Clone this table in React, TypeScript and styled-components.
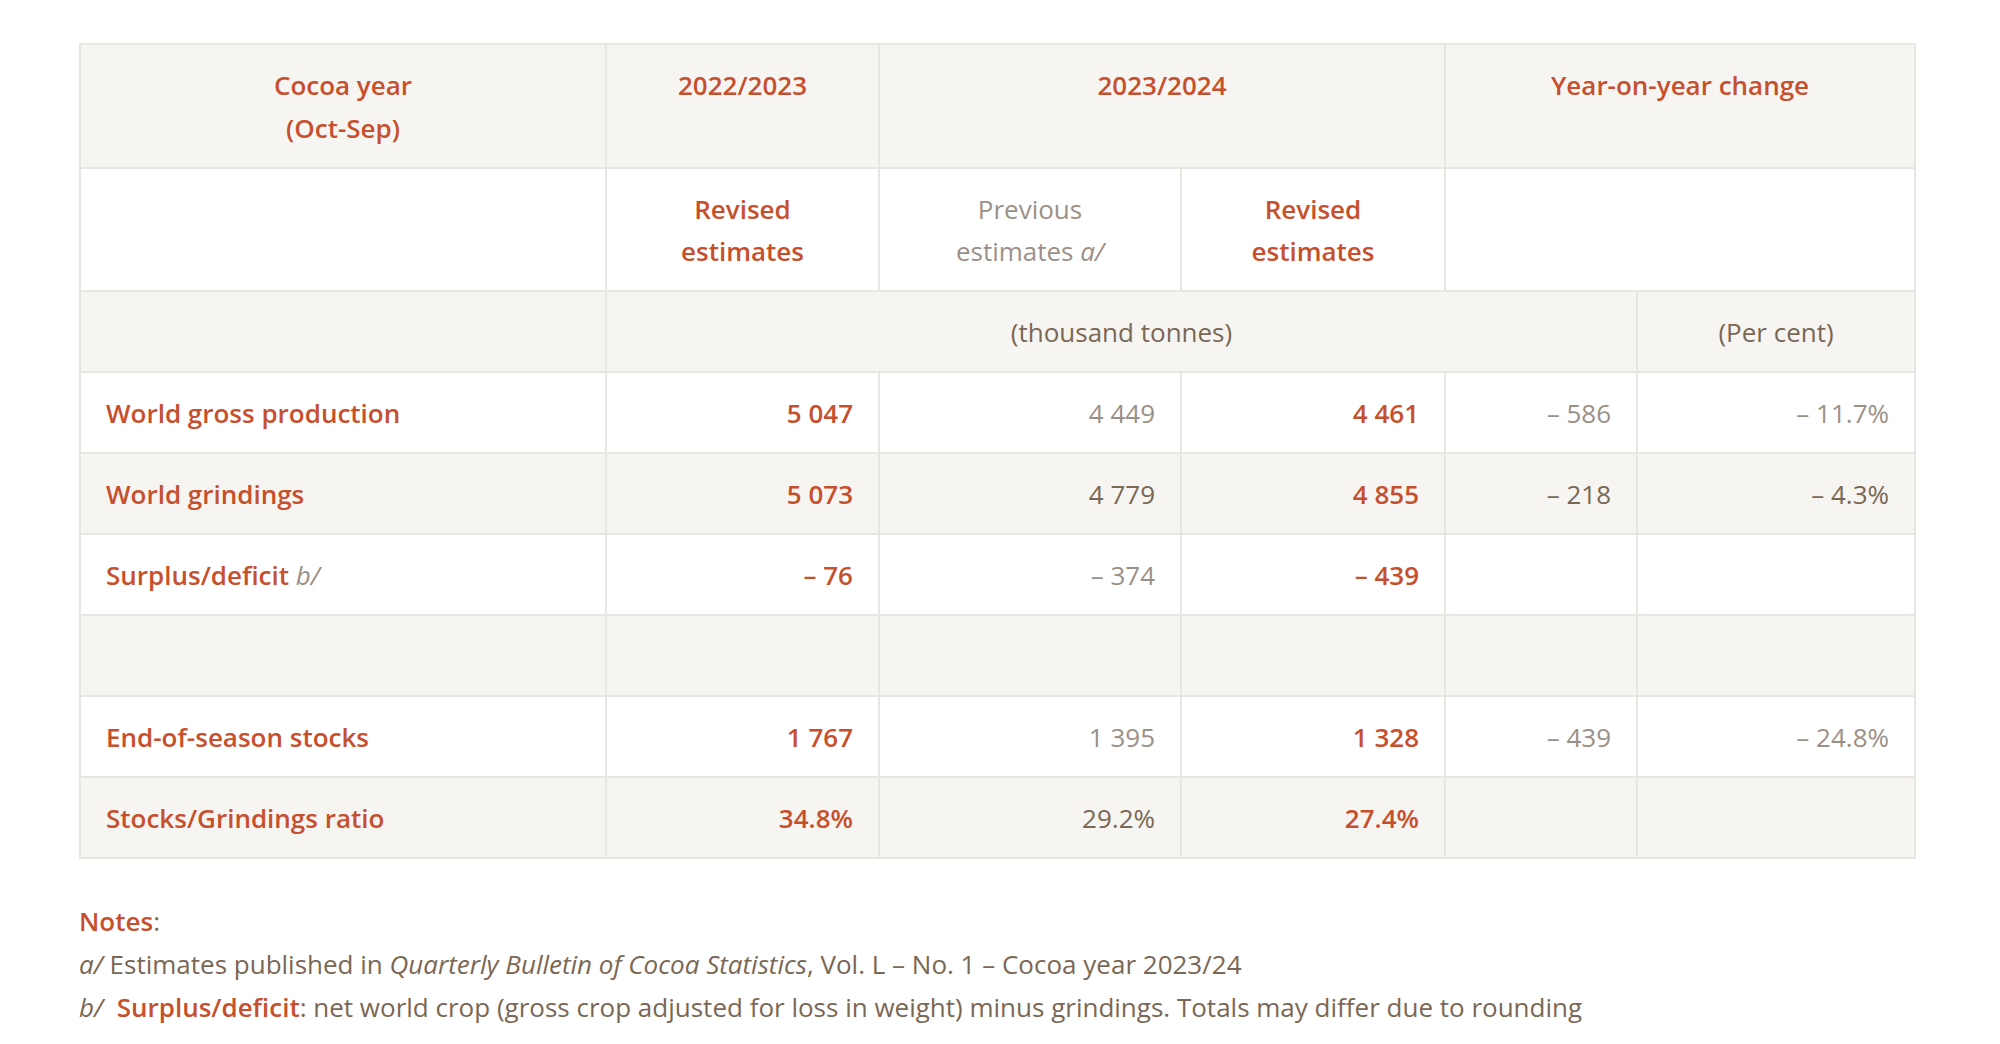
import React from 'react'
import styled, { createGlobalStyle } from 'styled-components'

const GlobalStyle = createGlobalStyle`
  html, body {
    margin: 0;
    padding: 0;
    background: #ffffff;
  }

  body {
    font-family: 'Open Sans', 'Liberation Sans', sans-serif;
    font-size: 26px;
    color: #7a6754;
  }
`

const RED = '#c6502d'
const BROWN = '#7a6754'
const GREY = '#9b9088'

const Page = styled.div`
  padding: 43px 86px 40px 79px;
`

const Table = styled.table`
  width: 1835px;
  border-collapse: collapse;
  table-layout: fixed;
  border: 2px solid #e8e6e1;
`

const Row = styled.tr<{ $shade?: boolean }>`
  background: ${(p) => (p.$shade ? '#f6f5f2' : '#ffffff')};
  color: ${(p) => (p.$shade ? BROWN : GREY)};
`

const Cell = styled.td<{ $align?: 'left' | 'center' | 'right'; $accent?: boolean }>`
  border: 2px solid #e8e6e1;
  padding: 19px 25px 17.5px;
  line-height: 42.5px;
  vertical-align: top;
  text-align: ${(p) => p.$align || 'left'};
  color: ${(p) => (p.$accent ? RED : 'inherit')};
  font-weight: ${(p) => (p.$accent ? 600 : 400)};
  white-space: nowrap;
`

const Mark = styled.em`
  font-style: italic;
  font-weight: 400;
  color: ${GREY};
`

const Notes = styled.div`
  margin-top: 41px;
  line-height: 43px;
  color: ${BROWN};
`

const NoteKey = styled.span`
  color: ${RED};
  font-weight: 600;
`

const widths = [526, 273, 302, 264, 192, 278]

type DataRow = {
  label: React.ReactNode
  values: string[]
  shade?: boolean
}

const rows: DataRow[] = [
  { label: 'World gross production', values: ['5 047', '4 449', '4 461', '– 586', '– 11.7%'] },
  { label: 'World grindings', values: ['5 073', '4 779', '4 855', '– 218', '– 4.3%'], shade: true },
  {
    label: (
      <>
        Surplus/deficit <Mark>b/</Mark>
      </>
    ),
    values: ['– 76', '– 374', '– 439', '', ''],
  },
  { label: '', values: ['', '', '', '', ''], shade: true },
  { label: 'End-of-season stocks', values: ['1 767', '1 395', '1 328', '– 439', '– 24.8%'] },
  { label: 'Stocks/Grindings ratio', values: ['34.8%', '29.2%', '27.4%', '', ''], shade: true },
]

// the revised columns (first and third value) are in red
const accentCols = [0, 2]

const blank = '\u00a0'

export default function App() {
  return (
    <Page>
      <GlobalStyle />
      <Table>
        <colgroup>
          {widths.map((w, i) => (
            <col key={i} style={{ width: w }} />
          ))}
        </colgroup>
        <tbody>
          <Row $shade>
            <Cell $align="center" $accent>
              Cocoa year
              <br />
              (Oct-Sep)
            </Cell>
            <Cell $align="center" $accent>
              2022/2023
            </Cell>
            <Cell $align="center" $accent colSpan={2}>
              2023/2024
            </Cell>
            <Cell $align="center" $accent colSpan={2}>
              Year-on-year change
            </Cell>
          </Row>
          <Row>
            <Cell />
            <Cell $align="center" $accent>
              Revised
              <br />
              estimates
            </Cell>
            <Cell $align="center">
              Previous
              <br />
              estimates <Mark>a/</Mark>
            </Cell>
            <Cell $align="center" $accent>
              Revised
              <br />
              estimates
            </Cell>
            <Cell colSpan={2} />
          </Row>
          <Row $shade>
            <Cell />
            <Cell $align="center" colSpan={4}>
              (thousand tonnes)
            </Cell>
            <Cell $align="center">(Per cent)</Cell>
          </Row>
          {rows.map((row, i) => (
            <Row key={i} $shade={row.shade}>
              <Cell $accent>{row.label || blank}</Cell>
              {row.values.map((v, j) => (
                <Cell key={j} $align="right" $accent={accentCols.includes(j)}>
                  {v || blank}
                </Cell>
              ))}
            </Row>
          ))}
        </tbody>
      </Table>
      <Notes>
        <div>
          <NoteKey>Notes</NoteKey>:
        </div>
        <div>
          <em>a/</em> Estimates published in <em>Quarterly Bulletin of Cocoa Statistics</em>, Vol. L – No. 1 –
          Cocoa year 2023/24
        </div>
        <div>
          <em>b/</em>&nbsp; <NoteKey>Surplus/deficit</NoteKey>: net world crop (gross crop adjusted for loss in
          weight) minus grindings. Totals may differ due to rounding
        </div>
      </Notes>
    </Page>
  )
}
